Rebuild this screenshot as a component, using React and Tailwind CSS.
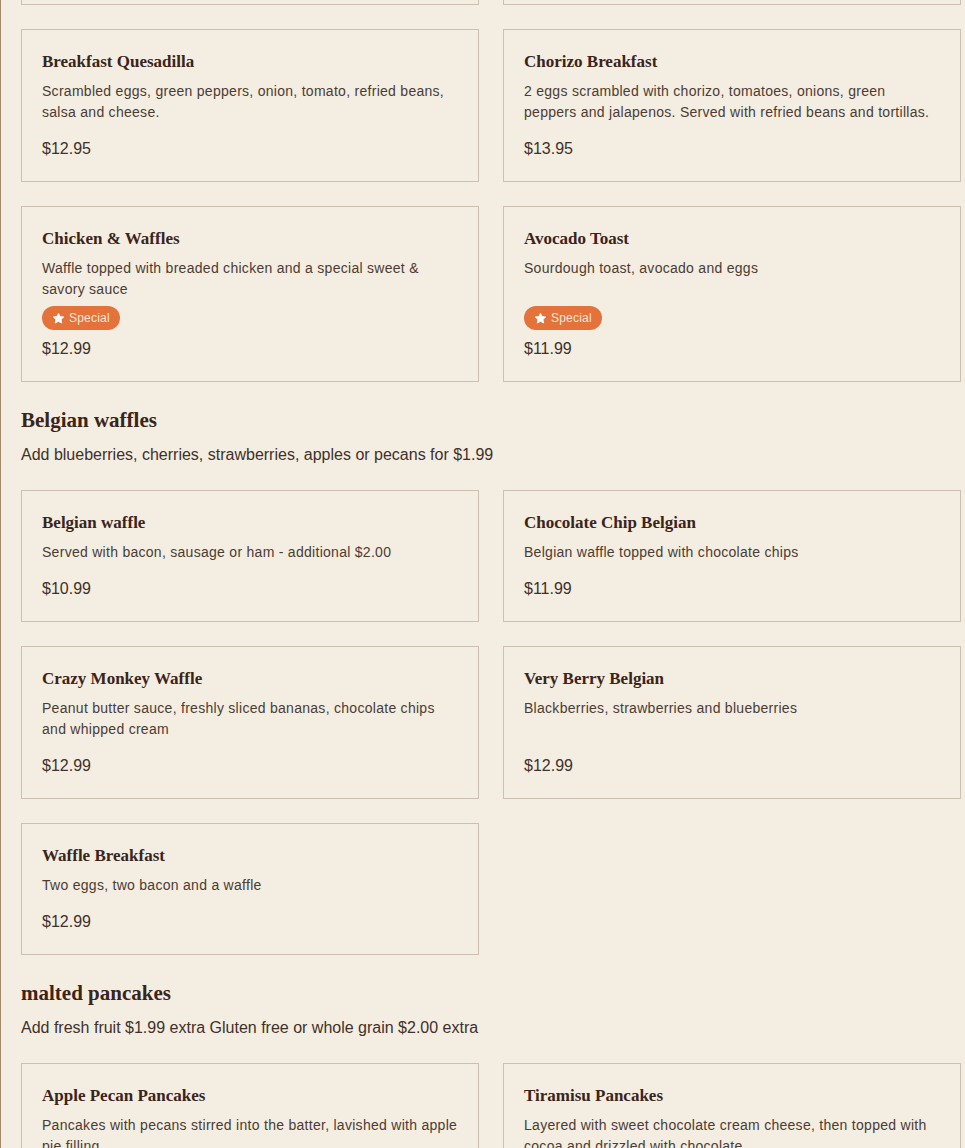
import React from "react";

const serif = "font-['Liberation_Serif','Times_New_Roman',serif]";
const sans = "font-['Liberation_Sans',Arial,sans-serif]";

function Star() {
  return (
    <svg width="13" height="13" viewBox="0 0 24 24" fill="currentColor" aria-hidden="true">
      <path d="M12 2.2l2.95 6.1 6.7.9-4.9 4.65 1.2 6.65L12 17.3l-5.95 3.2 1.2-6.65L2.35 9.2l6.7-.9z" strokeLinejoin="round" stroke="currentColor" strokeWidth="1.5" />
    </svg>
  );
}

function Card({ title, desc, price, special }) {
  return (
    <div className="flex flex-col border border-[#cbc0b2] px-5 pt-5 pb-5">
      <h3 className={`${serif} text-[17px] leading-6 font-bold text-[#3b2419]`}>{title}</h3>
      <p className={`${sans} mt-[7px] text-[14px] leading-[21px] tracking-[0.28px] text-[#4b3c34] grow`}>{desc}</p>
      {special ? (
        <div className="mt-[6px] mb-[7px] flex">
          <span className={`${sans} flex h-6 items-center gap-1 rounded-full bg-[#e3733a] pl-[10px] pr-[10px] text-[12px] tracking-[0.2px] text-[#fde6d6]`}>
            <span className="text-white"><Star /></span>
            Special
          </span>
        </div>
      ) : (
        <div className="h-[14px]" />
      )}
      <div className={`${sans} text-[16px] leading-6 text-[#3f312b]`}>{price}</div>
    </div>
  );
}

function Grid({ children }) {
  return <div className="grid grid-cols-2 gap-x-6 gap-y-6">{children}</div>;
}

function Section({ title, note }) {
  return (
    <div className="mt-6 mb-[23px]">
      <h2 className={`${serif} text-[21px] leading-7 font-bold text-[#3b2419]`}>{title}</h2>
      <p className={`${sans} mt-[9px] text-[16px] leading-6 text-[#3f312b]`}>{note}</p>
    </div>
  );
}

export default function App() {
  return (
    <div className="min-h-[1148px] w-[965px] overflow-hidden border-l border-[#9e8866] bg-[#f4ede1] pl-5">
      <div className="w-[940px]">
        <div className="grid grid-cols-2 gap-x-6">
          <div className="h-[5px] border border-t-0 border-[#cbc0b2]" />
          <div className="h-[5px] border border-t-0 border-[#cbc0b2]" />
        </div>
        <div className="mt-6">
          <Grid>
            <Card
              title="Breakfast Quesadilla"
              desc="Scrambled eggs, green peppers, onion, tomato, refried beans, salsa and cheese."
              price="$12.95"
            />
            <Card
              title="Chorizo Breakfast"
              desc="2 eggs scrambled with chorizo, tomatoes, onions, green peppers and jalapenos. Served with refried beans and tortillas."
              price="$13.95"
            />
            <Card
              title="Chicken & Waffles"
              desc="Waffle topped with breaded chicken and a special sweet & savory sauce"
              price="$12.99"
              special
            />
            <Card title="Avocado Toast" desc="Sourdough toast, avocado and eggs" price="$11.99" special />
          </Grid>
        </div>
        <Section title="Belgian waffles" note="Add blueberries, cherries, strawberries, apples or pecans for $1.99" />
        <Grid>
          <Card title="Belgian waffle" desc="Served with bacon, sausage or ham - additional $2.00" price="$10.99" />
          <Card title="Chocolate Chip Belgian" desc="Belgian waffle topped with chocolate chips" price="$11.99" />
          <Card
            title="Crazy Monkey Waffle"
            desc="Peanut butter sauce, freshly sliced bananas, chocolate chips and whipped cream"
            price="$12.99"
          />
          <Card title="Very Berry Belgian" desc="Blackberries, strawberries and blueberries" price="$12.99" />
          <Card title="Waffle Breakfast" desc="Two eggs, two bacon and a waffle" price="$12.99" />
        </Grid>
        <Section title="malted pancakes" note="Add fresh fruit $1.99 extra Gluten free or whole grain $2.00 extra" />
        <Grid>
          <Card
            title="Apple Pecan Pancakes"
            desc="Pancakes with pecans stirred into the batter, lavished with apple pie filling."
            price="$12.99"
          />
          <Card
            title="Tiramisu Pancakes"
            desc="Layered with sweet chocolate cream cheese, then topped with cocoa and drizzled with chocolate."
            price="$12.99"
          />
        </Grid>
      </div>
    </div>
  );
}
